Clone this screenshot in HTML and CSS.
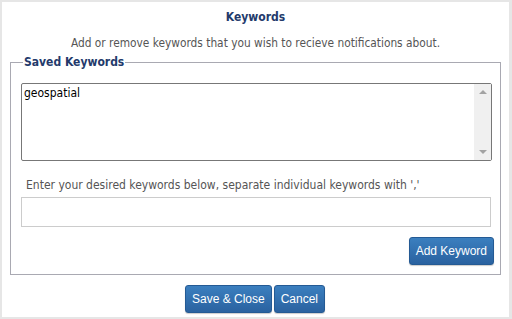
FILE: index.html
```html
<!DOCTYPE html>
<html>
<head>
    <title>Keywords</title>
    <link rel="stylesheet" href="styles.css">
</head>
<body>
<div class="dialog">
    <h1>Keywords</h1>
    <p class="intro">Add or remove keywords that you wish to recieve notifications about.</p>

    <fieldset class="saved">
        <legend>Saved Keywords</legend>
        <div class="list">
            <div class="list-text">geospatial</div>
            <div class="scroll">
                <span class="arrow up"></span>
                <span class="arrow down"></span>
            </div>
        </div>
        <p class="hint">Enter your desired keywords below, separate individual keywords with ','</p>
        <input class="entry" type="text">
        <div class="row-right">
            <button class="btn">Add Keyword</button>
        </div>
    </fieldset>

    <div class="actions">
        <button class="btn">Save &amp; Close</button>
        <button class="btn">Cancel</button>
    </div>
</div>
</body>
</html>
```

FILE: styles.css
```css
HTML, BODY {
    margin : 0;
    padding : 0;
}
BODY {
    background-color : #e6e6e6;
    font-family : "DejaVu Sans Condensed", "DejaVu Sans", sans-serif;
    font-size : 12px;
    color : #555;
    padding : 2px 3px 2px 2px;
    height : 319px;
    box-sizing : border-box;
}
.dialog {
    background-color : #fff;
    height : 315px;
    box-sizing : border-box;
    padding : 8px 8px 0 8px;
}
H1 {
    margin : 0;
    font-size : 12px;
    font-weight : bold;
    color : #233a6b;
    text-align : center;
    line-height : 14px;
}
.intro {
    margin : 12px 0 0 0;
    text-align : center;
    line-height : 14px;
    font-size : 11.8px;
    color : #555;
}
.saved {
    margin : 5px 0 0 0;
    border : 1px solid #a9a9b2;
    padding : 14px 8px 9px 10px;
}
.saved LEGEND {
    font-weight : bold;
    color : #233a6b;
    font-size : 12px;
    padding : 0 1px;
    margin-left : 2px;
}
.list {
    display : flex;
    height : 78px;
    border : 1px solid #777;
    border-radius : 2px;
    box-sizing : border-box;
}
.list-text {
    flex : 1;
    padding : 2px 2px;
    color : #000;
    line-height : 14px;
}
.scroll {
    width : 17px;
    background-color : #f0f0f0;
    display : flex;
    flex-direction : column;
    justify-content : space-between;
    align-items : center;
    padding : 6px 0;
}
.arrow {
    width : 0;
    height : 0;
    border-left : 4px solid transparent;
    border-right : 4px solid transparent;
}
.arrow.up {
    border-bottom : 4px solid #a3a3a3;
}
.arrow.down {
    border-top : 4px solid #a3a3a3;
}
.hint {
    margin : 17px 0 0 5px;
    line-height : 14px;
    color : #555;
}
.entry {
    display : block;
    margin-top : 5px;
    width : 470px;
    height : 30px;
    box-sizing : border-box;
    border : 1px solid #ccc;
    padding : 0 6px;
}
.row-right {
    display : flex;
    justify-content : flex-end;
    margin-top : 10px;
    margin-right : -2px;
}
.btn {
    font-family : "Liberation Sans", Arial, sans-serif;
    font-size : 12px;
    color : #fff;
    background-image : linear-gradient(#3b7fbf, #2a62a0);
    border : 1px solid #245a94;
    border-radius : 3px;
    height : 28px;
    padding : 0 6px;
    box-shadow : 0 1px 1px rgba(0,0,0,0.2);
}
.actions {
    display : flex;
    justify-content : center;
    gap : 2px;
    margin-top : 10px;
    margin-left : -1px;
}
```
